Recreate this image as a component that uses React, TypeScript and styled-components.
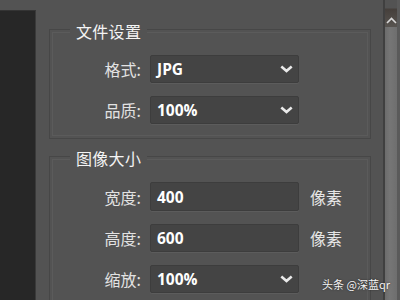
import styled, { createGlobalStyle } from 'styled-components'

const GlobalStyle = createGlobalStyle`
    html, body {
        margin: 0;
        padding: 0;
        background: #535353;
    }
    body {
        font-family: 'Noto Sans', 'Noto Sans CJK SC', sans-serif;
        -webkit-font-smoothing: antialiased;
    }
`

const Screen = styled.div`
    display: flex;
    width: 400px;
    height: 300px;
    overflow: hidden;
    background: #535353;
    position: relative;
`

const SideStrip = styled.div`
    width: 35px;
    margin-top: 10px;
    background: #272727;
    border-top: 1px solid #343434;
    border-right: 1px solid #3a3a3a;
`

const Content = styled.div`
    flex: 1;
    display: flex;
    flex-direction: column;
    gap: 5px;
    padding: 17px 12px 0 13px;
`

const Group = styled.fieldset`
    margin: 0;
    padding: 14px 0 14px 0;
    border: 1px solid #474747;
    box-shadow: inset 0 0 0 2px #535353, inset 0 0 0 3px #5b5b5b;
    display: flex;
    flex-direction: column;
    gap: 13px;
`

const Legend = styled.legend`
    margin-left: 20px;
    padding: 4px 6px 0;
    background: #535353;
    color: #f4f4f4;
    font-family: 'Noto Sans CJK SC', sans-serif;
    font-size: 16px;
    line-height: 20px;
    letter-spacing: 0.3px;
`

const Row = styled.div`
    display: grid;
    grid-template-columns: 91px 149px auto;
    column-gap: 9px;
    align-items: center;
`

const Label = styled.span`
    text-align: right;
    color: #e2e2e2;
    font-family: 'Noto Sans CJK SC', sans-serif;
    font-size: 16px;
    line-height: 20px;
`

const Field = styled.div<{ $tall?: boolean }>`
    display: flex;
    align-items: center;
    justify-content: space-between;
    height: ${(p) => (p.$tall ? 29 : 28)}px;
    box-sizing: border-box;
    padding: 0 5px 0 6px;
    background: #444444;
    border: 1px solid #3d3d3d;
    border-radius: 2px;
    box-shadow: 0 1px 0 #5c5c5c;
    color: #ffffff;
    font-family: 'Open Sans', 'Noto Sans', sans-serif;
    font-weight: 700;
    font-size: 15.5px;
`

const Unit = styled.span`
    margin-left: 2px;
    color: #e6e6e6;
    font-family: 'Noto Sans CJK SC', sans-serif;
    font-size: 16px;
`

const ScrollBar = styled.div`
    width: 15px;
    display: flex;
    flex-direction: column;
    background: #5a5a5a;
    border-left: 2px solid #404040;
`

const ArrowButton = styled.div`
    height: 27px;
    display: flex;
    align-items: flex-end;
    justify-content: center;
    padding-bottom: 3px;
    box-sizing: border-box;
    background: linear-gradient(180deg, #535353 0, #535353 8px, #453f3b 9px, #57534f 26px);
    margin-right: 3px;
`

const Thumb = styled.div`
    flex: 1;
    margin-right: 3px;
    background: linear-gradient(90deg, #6c6c6c, #767676 40%, #6e6e6e);
`

const Watermark = styled.div`
    position: absolute;
    right: 10px;
    bottom: 8px;
    color: #f4f4f4;
    font-family: 'Noto Sans CJK SC', sans-serif;
    font-size: 11px;
    text-shadow: 0 0 2px rgba(0, 0, 0, 0.6);
`

const Chevron = () => (
    <svg width="13" height="8" viewBox="0 0 13 8">
        <path d="M1.3 1.5 L6.5 6 L11.7 1.5" fill="none" stroke="#eaeaea" strokeWidth="2.6" />
    </svg>
)

const ChevronUp = () => (
    <svg width="11" height="7" viewBox="0 0 11 7">
        <path d="M1 6 L5.5 1.5 L10 6" fill="none" stroke="#d8d8d8" strokeWidth="1.6" />
    </svg>
)

const Select = ({ value }: { value: string }) => (
    <Field>
        <span>{value}</span>
        <Chevron />
    </Field>
)

export default function App() {
    return (
        <>
            <GlobalStyle />
            <Screen>
                <SideStrip />
                <Content>
                    <Group>
                        <Legend>文件设置</Legend>
                        <Row>
                            <Label>格式:</Label>
                            <Select value="JPG" />
                        </Row>
                        <Row>
                            <Label>品质:</Label>
                            <Select value="100%" />
                        </Row>
                    </Group>
                    <Group>
                        <Legend>图像大小</Legend>
                        <Row>
                            <Label>宽度:</Label>
                            <Field $tall>400</Field>
                            <Unit>像素</Unit>
                        </Row>
                        <Row>
                            <Label>高度:</Label>
                            <Field>600</Field>
                            <Unit>像素</Unit>
                        </Row>
                        <Row>
                            <Label>缩放:</Label>
                            <Select value="100%" />
                        </Row>
                    </Group>
                </Content>
                <ScrollBar>
                    <ArrowButton>
                        <ChevronUp />
                    </ArrowButton>
                    <Thumb />
                </ScrollBar>
                <Watermark>头条 @深蓝qr</Watermark>
            </Screen>
        </>
    )
}
